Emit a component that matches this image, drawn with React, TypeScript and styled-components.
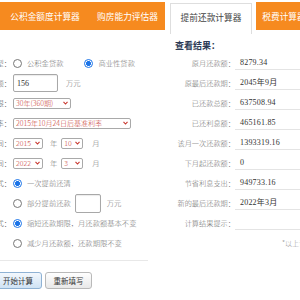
import React from 'react';
import styled, { createGlobalStyle } from 'styled-components';

const Global = createGlobalStyle`
  html, body { margin: 0; padding: 0; background: #fff; width: 300px; height: 300px; overflow: hidden; }
  body { font-family: "Noto Sans CJK SC", "Noto Sans", sans-serif; }
`;

const Page = styled.div`
  width: 300px;
  height: 300px;
  overflow: hidden;
`;

const TabBar = styled.div`
  display: flex;
  height: 28px;
  margin-top: 2px;
`;

const Tab = styled.div<{ $w: number; $active?: boolean }>`
  flex: 0 0 ${(p) => p.$w}px;
  box-sizing: border-box;
  display: flex;
  align-items: center;
  justify-content: center;
  white-space: nowrap;
  font-size: 8.7px;
  background: ${(p) => (p.$active ? '#fff' : '#f68a1f')};
  color: ${(p) => (p.$active ? '#444' : '#fff')};
  ${(p) =>
    p.$active
      ? `margin: 1px 4px -4px 5px; border: 1px solid #dedede; border-bottom: none; padding-bottom: 3px;`
      : ''}
`;

const Content = styled.div`
  display: flex;
  align-items: flex-start;
`;

const LeftPanel = styled.div`
  flex: 0 0 230px;
  margin-left: -82px;
  padding-top: 23px;
`;

const FormRow = styled.div`
  display: flex;
  align-items: center;
  height: 20px;
  font-size: 7.3px;
  font-weight: 300;
  color: #6e6e6e;
  white-space: nowrap;
`;

const FieldLabel = styled.div`
  flex: 0 0 93px;
  text-align: right;
  color: #555;
  margin-right: 2px;
`;

const Option = styled.span<{ $gapAfter?: number }>`
  display: inline-flex;
  align-items: center;
  gap: 5px;
  margin-right: ${(p) => p.$gapAfter ?? 0}px;
`;

const Radio = styled.span<{ $on?: boolean }>`
  box-sizing: border-box;
  width: 9px;
  height: 9px;
  border-radius: 50%;
  border: 1px solid ${(p) => (p.$on ? '#1a73e8' : '#767676')};
  background: ${(p) => (p.$on ? 'radial-gradient(circle, #1a73e8 0 2.2px, #fff 2.6px)' : '#fff')};
`;

const TextBox = styled.div<{ $w: number; $h: number }>`
  box-sizing: border-box;
  width: ${(p) => p.$w}px;
  height: ${(p) => p.$h}px;
  border: 1px solid #a8a8a8;
  border-radius: 2px;
  box-shadow: inset 0 1px 1px rgba(0, 0, 0, 0.08);
  padding-left: 3px;
  display: flex;
  align-items: center;
  font-family: "Liberation Serif", serif;
  font-weight: normal;
  font-size: 8px;
  color: #333;
`;

const Unit = styled.span<{ $ml: number; $mr?: number }>`
  margin-left: ${(p) => p.$ml}px;
  margin-right: ${(p) => p.$mr ?? 0}px;
`;

const SelectBox = styled.div<{ $w: number }>`
  box-sizing: border-box;
  width: ${(p) => p.$w}px;
  height: 11px;
  border: 1px solid #a9a9a9;
  border-radius: 2px;
  display: flex;
  align-items: center;
  justify-content: space-between;
  padding: 0 2px;
  color: #c8382f;
  font-size: 7px;
  background: #fff;
`;

const Chevron = () => (
  <svg width="5" height="4" viewBox="0 0 5 4">
    <path d="M0.5 0.8 L2.5 3 L4.5 0.8" fill="none" stroke="#c8382f" strokeWidth="1.1" />
  </svg>
);

const Select: React.FC<{ w: number; children: React.ReactNode }> = ({ w, children }) => (
  <SelectBox $w={w}>
    <span>{children}</span>
    <Chevron />
  </SelectBox>
);

const Divider = styled.div`
  margin-top: 7px;
  border-top: 1px solid #e8e8e8;
`;

const ButtonRow = styled.div`
  display: flex;
  gap: 3px;
  margin-top: 11px;
  padding-left: 76px;
`;

const Button = styled.div<{ $primary?: boolean; $w: number }>`
  box-sizing: border-box;
  width: ${(p) => p.$w}px;
  height: 17px;
  border-radius: 3px;
  border: 1px solid ${(p) => (p.$primary ? '#8fb2d4' : '#b9b9b9')};
  background: ${(p) =>
    p.$primary ? 'linear-gradient(#f3f8fd, #cfe2f4)' : 'linear-gradient(#ffffff, #e8e8e8)'};
  display: flex;
  align-items: center;
  justify-content: center;
  font-size: 7.5px;
  color: #333;
`;

const RightPanel = styled.div`
  flex: 0 0 200px;
  margin-left: 12px;
`;

const ResultTitle = styled.div`
  margin-top: 10px;
  margin-bottom: 1px;
  height: 12px;
  line-height: 12px;
  padding-left: 15px;
  font-size: 9px;
  font-weight: bold;
  color: #2c3b56;
`;

const ResultRow = styled.div`
  display: flex;
  align-items: center;
  height: 20px;
  white-space: nowrap;
`;

const ResultLabel = styled.div`
  flex: 0 0 75px;
  text-align: right;
  font-size: 7.2px;
  font-weight: 300;
  color: #6e6e6e;
`;

const ResultValue = styled.div`
  flex: 1;
  height: 12px;
  line-height: 12px;
  padding-left: 5px;
  border-bottom: 1px solid #e4e4e4;
  font-family: "Liberation Serif", "Noto Sans CJK SC", serif;
  font-size: 8px;
  letter-spacing: 0.2px;
  color: #333;
`;

const Note = styled.div`
  height: 20px;
  line-height: 20px;
  padding-left: 122px;
  font-size: 7px;
  font-weight: 300;
  color: #999;
  white-space: nowrap;
`;

const results: [string, string][] = [
  ['原月还款额：', '8279.34'],
  ['原最后还款期：', '2045年9月'],
  ['已还款总额：', '637508.94'],
  ['已还利息额：', '465161.85'],
  ['该月一次还款额：', '1393319.16'],
  ['下月起还款额：', '0'],
  ['节省利息支出：', '949733.16'],
  ['新的最后还款期：', '2022年3月'],
  ['计算结果提示：', ''],
];

export default function App() {
  return (
    <Page>
      <Global />
      <TabBar>
        <Tab $w={90}>公积金额度计算器</Tab>
        <Tab $w={75}>购房能力评估器</Tab>
        <Tab $w={82} $active>提前还款计算器</Tab>
        <Tab $w={56}>税费计算器</Tab>
      </TabBar>
      <Content>
        <LeftPanel>
          <FormRow>
            <FieldLabel>贷款类型：</FieldLabel>
            <Option $gapAfter={21}>
              <Radio />
              公积金贷款
            </Option>
            <Option>
              <Radio $on />
              商业性贷款
            </Option>
          </FormRow>
          <FormRow>
            <FieldLabel>贷款总额：</FieldLabel>
            <TextBox $w={45} $h={18}>156</TextBox>
            <Unit $ml={8}>万元</Unit>
          </FormRow>
          <FormRow>
            <FieldLabel>贷款期限：</FieldLabel>
            <Select w={58}>30年(360期)</Select>
          </FormRow>
          <FormRow>
            <FieldLabel>贷款利率：</FieldLabel>
            <Select w={118}>2015年10月24日后基准利率</Select>
          </FormRow>
          <FormRow>
            <FieldLabel>首次还款时间：</FieldLabel>
            <Select w={30}>2015</Select>
            <Unit $ml={7} $mr={4}>年</Unit>
            <Select w={22}>10</Select>
            <Unit $ml={9}>月</Unit>
          </FormRow>
          <FormRow>
            <FieldLabel>提前还款时间：</FieldLabel>
            <Select w={30}>2022</Select>
            <Unit $ml={7} $mr={4}>年</Unit>
            <Select w={22}>3</Select>
            <Unit $ml={9}>月</Unit>
          </FormRow>
          <FormRow>
            <FieldLabel>提前还款方式：</FieldLabel>
            <Option>
              <Radio $on />
              一次提前还清
            </Option>
          </FormRow>
          <FormRow>
            <FieldLabel />
            <Option $gapAfter={4}>
              <Radio />
              部分提前还款
            </Option>
            <TextBox $w={26} $h={19} />
            <Unit $ml={6}>万元</Unit>
          </FormRow>
          <FormRow>
            <FieldLabel>处理方式：</FieldLabel>
            <Option>
              <Radio $on />
              缩短还款期限，月还款额基本不变
            </Option>
          </FormRow>
          <FormRow>
            <FieldLabel />
            <Option>
              <Radio />
              减少月还款额，还款期限不变
            </Option>
          </FormRow>
          <Divider />
          <ButtonRow>
            <Button $primary $w={48}>开始计算</Button>
            <Button $w={47}>重新填写</Button>
          </ButtonRow>
        </LeftPanel>
        <RightPanel>
          <ResultTitle>查看结果：</ResultTitle>
          {results.map(([label, value]) => (
            <ResultRow key={label}>
              <ResultLabel>{label}</ResultLabel>
              <ResultValue>{value}</ResultValue>
            </ResultRow>
          ))}
          <Note>*以上计算结果仅供参考</Note>
        </RightPanel>
      </Content>
    </Page>
  );
}
